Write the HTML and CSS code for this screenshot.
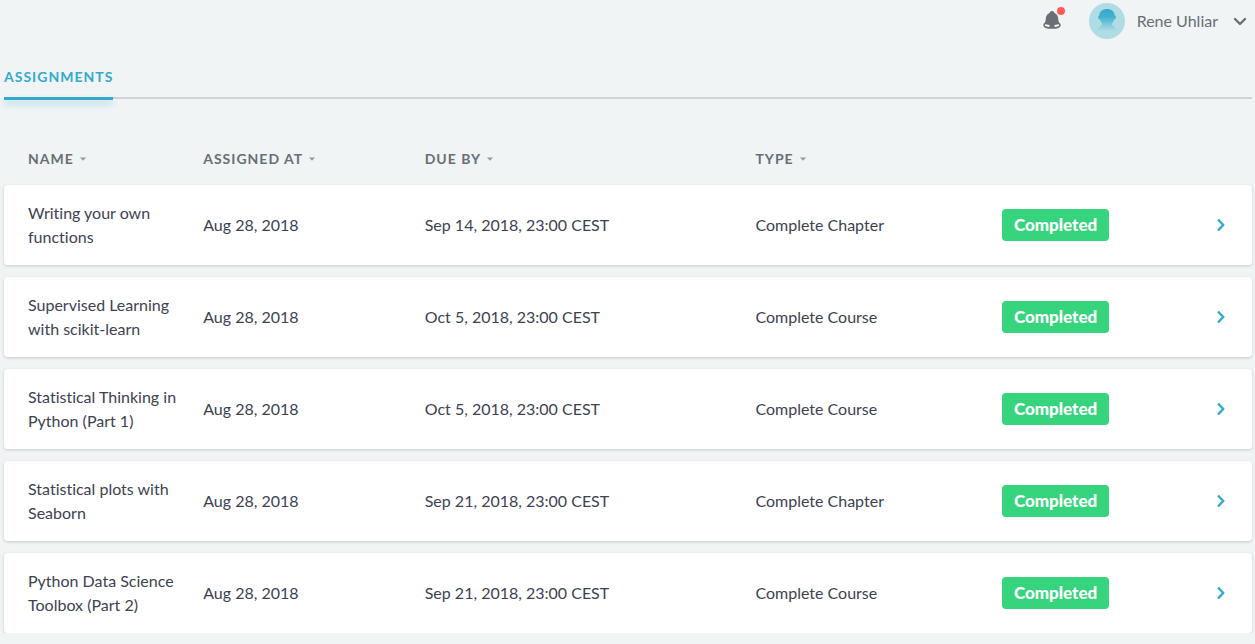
FILE: index.html
```
<!DOCTYPE html>
<html lang="en">
<head>
<meta charset="utf-8">
<meta name="viewport" content="width=device-width, initial-scale=1">
<title>Assignments</title>
<link rel="stylesheet" href="styles.css">
</head>
<body>
<svg class="sprite" aria-hidden="true">
  <symbol id="chevron" viewBox="0 0 10 14"><path d="M2 1.500L7.200 7 2 12.500" fill="none" stroke="currentColor" stroke-width="2.400"/></symbol>
  <symbol id="sort" viewBox="0 0 6 4"><path d="M0 .5h6L3 3.7z" fill="currentColor"/></symbol>
</svg>
<header class="topbar">
  <button class="bell" type="button" aria-label="Notifications">
    <svg width="24" height="26" viewBox="0 0 24 26">
      <ellipse cx="11" cy="20.200" rx="8" ry="2.900" fill="none" stroke="#686f75" stroke-width="1.500"/>
      <path d="M11 6c-1.300 0-2.300.8-2.500 1.900C6 9 5 11 4.800 13.500c-.1 2-.5 3.500-1.300 5C5.500 19.700 8 20 11 20s5.500-.3 7.500-1.500c-.8-1.500-1.200-3-1.300-5-.2-2.500-1.200-4.500-3.700-5.600C13.300 6.800 12.300 6 11 6z" fill="#686f75"/>
      <path d="M8.500 20h5v2.500q-2.500 1-5 0z" fill="#686f75"/>
      <circle cx="20" cy="6" r="4" fill="#fe5c5c"/>
    </svg>
  </button>
  <button class="account" type="button">
    <svg class="avatar" width="36" height="36" viewBox="0 0 36 36" aria-hidden="true">
      <defs><linearGradient id="face" gradientUnits="userSpaceOnUse" x1="0" y1="6" x2="0" y2="28"><stop offset="0" stop-color="#33aacc"/><stop offset=".35" stop-color="#42b1cf"/><stop offset="1" stop-color="#b0dce4"/></linearGradient></defs>
      <circle cx="18" cy="18" r="18" fill="#b0dce4"/>
      <path d="M18 6c-4.500 0-7.500 2.500-7.800 6.500-1 .2-1.200 1-1 2.200.2 1.300.8 2 1.800 2 .5 1.800 1.200 3 2.200 4-.1 1.500-.8 2.200-2.200 2.700C9.500 24 9 25 9 28h18c0-3-.5-4-2-4.600-1.400-.5-2.100-1.200-2.200-2.700 1-1 1.700-2.200 2.200-4 1 0 1.600-.7 1.800-2 .2-1.200 0-2-1-2.200C25.500 8.500 22.500 6 18 6z" fill="url(#face)"/>
    </svg>
    <span>Rene Uhliar</span>
    <svg class="caret" width="14" height="10" viewBox="0 0 14 10" aria-hidden="true"><path d="M2 3l5 5 5-5" fill="none" stroke="currentColor" stroke-width="2.400" stroke-linecap="round" stroke-linejoin="round"/></svg>
  </button>
</header>
<main class="content">
  <nav class="tabs"><a class="tab" href="#assignments" aria-current="page">ASSIGNMENTS</a></nav>
  <table class="assignments" id="assignments">
    <colgroup><col class="col-name"><col class="col-assigned"><col class="col-due"><col class="col-type"><col class="col-status"><col></colgroup>
    <thead>
      <tr>
        <th scope="col"><button class="sort" type="button">NAME <svg><use href="#sort"/></svg></button></th>
        <th scope="col"><button class="sort" type="button">ASSIGNED AT <svg><use href="#sort"/></svg></button></th>
        <th scope="col"><button class="sort" type="button">DUE BY <svg><use href="#sort"/></svg></button></th>
        <th scope="col"><button class="sort" type="button">TYPE <svg><use href="#sort"/></svg></button></th>
        <td></td>
        <td></td>
      </tr>
    </thead>
    <tbody>
      <tr><td>Writing your own functions</td><td>Aug 28, 2018</td><td>Sep 14, 2018, 23:00 CEST</td><td>Complete Chapter</td><td><span class="badge">Completed</span></td><td><a class="open" href="#functions" aria-label="Open Writing your own functions"><svg><use href="#chevron"/></svg></a></td></tr>
      <tr><td>Supervised Learning with scikit-learn</td><td>Aug 28, 2018</td><td>Oct 5, 2018, 23:00 CEST</td><td>Complete Course</td><td><span class="badge">Completed</span></td><td><a class="open" href="#supervised" aria-label="Open Supervised Learning with scikit-learn"><svg><use href="#chevron"/></svg></a></td></tr>
      <tr><td>Statistical Thinking in Python (Part 1)</td><td>Aug 28, 2018</td><td>Oct 5, 2018, 23:00 CEST</td><td>Complete Course</td><td><span class="badge">Completed</span></td><td><a class="open" href="#statistical" aria-label="Open Statistical Thinking in Python (Part 1)"><svg><use href="#chevron"/></svg></a></td></tr>
      <tr><td>Statistical plots with Seaborn</td><td>Aug 28, 2018</td><td>Sep 21, 2018, 23:00 CEST</td><td>Complete Chapter</td><td><span class="badge">Completed</span></td><td><a class="open" href="#seaborn" aria-label="Open Statistical plots with Seaborn"><svg><use href="#chevron"/></svg></a></td></tr>
      <tr><td>Python Data Science Toolbox (Part 2)</td><td>Aug 28, 2018</td><td>Sep 21, 2018, 23:00 CEST</td><td>Complete Course</td><td><span class="badge">Completed</span></td><td><a class="open" href="#toolbox" aria-label="Open Python Data Science Toolbox (Part 2)"><svg><use href="#chevron"/></svg></a></td></tr>
    </tbody>
  </table>
</main>
</body>
</html>
```
FILE: styles.css
```
* { box-sizing: border-box; }
body {
  margin: 0;
  background: #f0f4f5;
  color: #3d4251;
  font: 16px/24px Lato, sans-serif;
  font-variant-ligatures: none;
}
button {
  padding: 0;
  border: 0;
  background: none;
  color: #686f75;
  font: inherit;
  cursor: pointer;
}
svg { display: block; }
.sprite { display: none; }
.topbar {
  display: flex;
  justify-content: flex-end;
  align-items: center;
  gap: 24px;
  height: 42px;
  padding-right: 8px;
}
.bell { padding-bottom: 6px; }
.account {
  display: flex;
  align-items: center;
  gap: 12px;
}
.caret { margin-left: 3px; }
.content { padding: 20px 3px 0 4px; }
.tabs {
  display: flex;
  border-bottom: 2px solid #d1d3d8;
}
.tab {
  display: flex;
  flex-direction: column;
  justify-content: space-between;
  height: 38px;
  margin-bottom: -3px;
  padding-top: 3px;
  color: #33aacc;
  font-size: 14px;
  font-weight: 700;
  letter-spacing: 1px;
  text-decoration: none;
}
.tab::after {
  content: "";
  height: 3px;
  background: #33aacc;
  box-shadow: 0 4px 6px rgba(51, 170, 204, .4);
}
.assignments {
  width: 100%;
  margin: 34px 0 -12px;
  table-layout: fixed;
  border-spacing: 0 12px;
}
.col-name { width: 15%; }
.col-assigned { width: 17.75%; }
.col-due { width: 26.5%; }
.col-type { width: 19.75%; }
.col-status { width: 10.5%; }
th, td {
  padding: 0 12px;
  text-align: left;
}
th:first-child, tbody td:first-child { padding-left: 24px; }
thead tr { height: 28px; }
.sort {
  display: flex;
  align-items: center;
  gap: 6px;
  font-size: 14px;
  font-weight: 700;
  letter-spacing: 1px;
}
.sort svg {
  width: 6px;
  height: 4px;
  color: #9498a0;
}
tbody tr {
  height: 80px;
  border-radius: 4px;
  box-shadow: 0 1px 3px rgba(61, 66, 81, .25);
}
tbody td { background: #fff; }
tbody td:first-child { border-radius: 4px 0 0 4px; }
tbody td:last-child {
  padding-right: 26px;
  border-radius: 0 4px 4px 0;
}
.badge {
  display: inline-block;
  padding: 4px 12px;
  border-radius: 4px;
  background: #36d57d;
  color: #fff;
  font-size: 17px;
  font-weight: 900;
  vertical-align: middle;
}
.open {
  display: flex;
  justify-content: flex-end;
  color: #33aacc;
}
.open svg {
  width: 10px;
  height: 14px;
}
```
